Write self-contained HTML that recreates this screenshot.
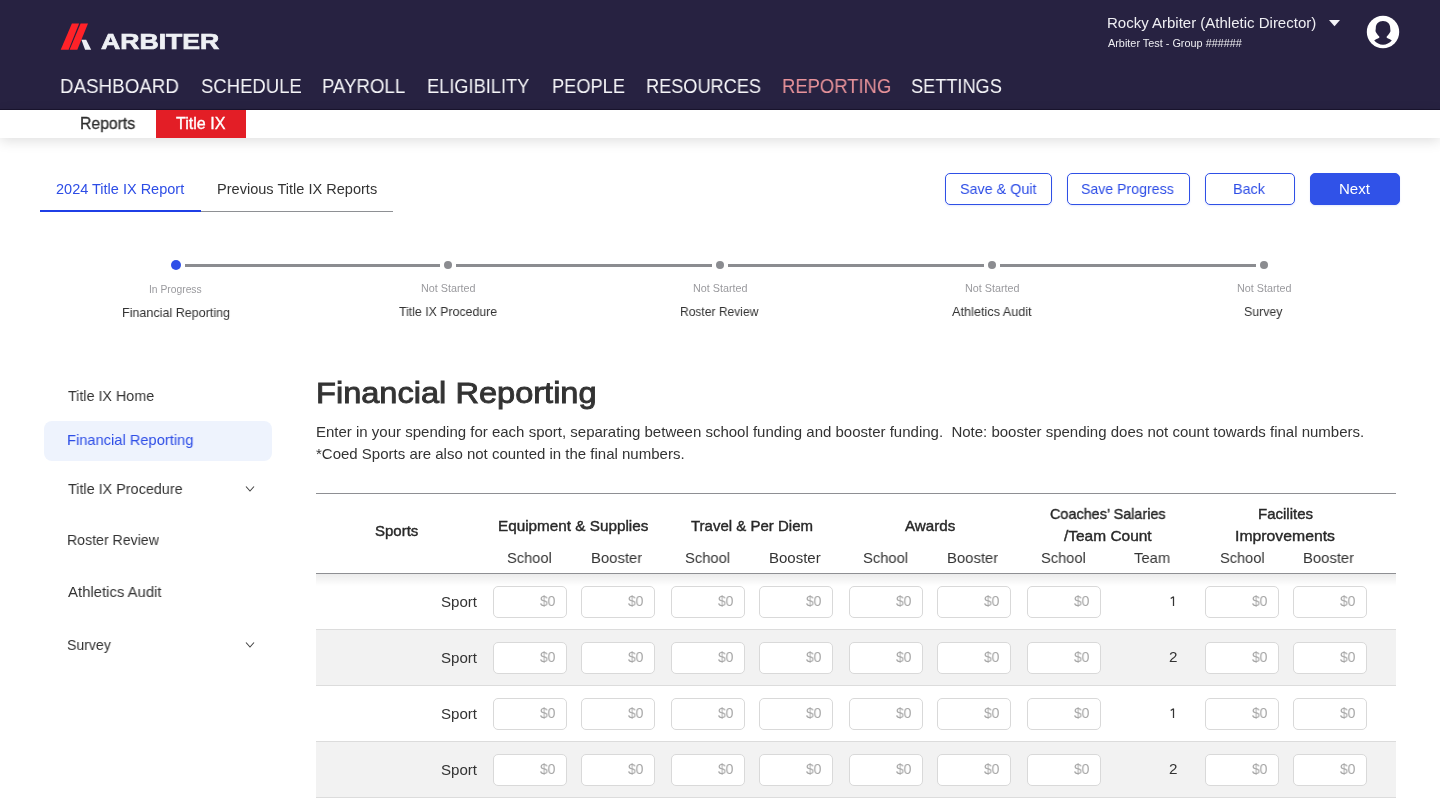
<!DOCTYPE html>
<html><head><meta charset="utf-8">
<style>
html,body{margin:0;padding:0;}
body{width:1440px;height:810px;overflow:hidden;position:relative;background:#fff;font-family:"Liberation Sans",sans-serif;}
.t{position:absolute;white-space:nowrap;transform-origin:0 0;will-change:transform;font-family:"Liberation Sans",sans-serif;}
.abs{position:absolute;}
.hdr{position:absolute;left:0;top:0;width:1440px;height:110px;background:#272241;}
.hdrline{position:absolute;left:0;top:109px;width:1440px;height:1px;background:#19142e;}
.subnav{position:absolute;left:0;top:110px;width:1440px;height:28px;background:#fff;box-shadow:0 3px 13px rgba(0,0,0,0.13);}
.redtab{position:absolute;left:156px;top:110px;width:90px;height:28px;background:#e31e26;}
.btn{position:absolute;top:173px;height:30px;border:1px solid #2f50e6;border-radius:5px;background:#fff;box-sizing:content-box;box-shadow:0 1px 2px rgba(53,86,230,0.12);}
.hl{position:absolute;height:1px;}
.row{position:absolute;left:316px;width:1080px;height:55px;}
.inp{position:absolute;width:72px;height:30px;border:1px solid #d9d9d9;border-radius:5px;background:#fff;}
.dot{position:absolute;border-radius:50%;}
.sline{position:absolute;top:264px;height:3px;background:#8b8c90;}
</style></head>
<body>
<div class="hdr"></div>
<div class="hdrline"></div>
<svg class="abs" style="left:0;top:0" width="240" height="60" viewBox="0 0 240 60">
  <polygon points="71.9,23.6 79.1,23.6 68.6,49.7 60.7,49.7" fill="#ff2228"/>
  <polygon points="80.6,23.6 88,23.6 77.3,49.7 69.6,49.7" fill="#ff2228"/>
  <polygon points="81.4,39.8 86.2,39.8 91.2,49.7 85.1,49.7" fill="#eef0f4"/>
</svg>
<svg class="abs" style="left:1329px;top:20px" width="11" height="7" viewBox="0 0 11 7"><polygon points="0,0 11,0 5.5,6.2" fill="#f5f5f8"/></svg>
<svg class="abs" style="left:1366px;top:15px" width="34" height="34" viewBox="0 0 34 34">
  <circle cx="17" cy="17" r="16.2" fill="#ffffff"/>
  <path d="M17 6C12.5 6 9.8 9 9.8 13C9.8 14.5 9.3 15.5 9.6 16.4C10 17.6 11.5 19.6 13.3 21.4L13.3 22.8C11.5 23.8 9.5 24.5 8.2 25.6C10.5 28.1 13.5 29.8 17 29.8C20.5 29.8 23.5 28.1 25.8 25.6C24.5 24.5 22.5 23.8 20.7 22.8L20.7 21.4C22.5 19.6 24 17.6 24.4 16.4C24.7 15.5 24.2 14.5 24.2 13C24.2 9 21.5 6 17 6Z" fill="#272241"/>
</svg>
<div class="subnav"></div>
<div class="redtab"></div>
<!-- tabs -->
<div class="hl" style="left:40px;top:211px;width:353px;background:#8e9094"></div>
<div class="abs" style="left:40px;top:210px;width:161px;height:2px;background:#1f3fe6"></div>
<!-- buttons -->
<div class="btn" style="left:945px;width:105px"></div>
<div class="btn" style="left:1067px;width:121px"></div>
<div class="btn" style="left:1205px;width:88px"></div>
<div class="btn" style="left:1310px;width:88px;background:#3052e8;border-color:#3052e8"></div>
<!-- stepper -->
<div class="dot" style="left:171px;top:260px;width:10px;height:10px;background:#2f4fe8"></div>
<div class="sline" style="left:185px;width:255px"></div>
<div class="dot" style="left:444px;top:261px;width:8px;height:8px;background:#8b8c90"></div>
<div class="sline" style="left:456px;width:256px"></div>
<div class="dot" style="left:716px;top:261px;width:8px;height:8px;background:#8b8c90"></div>
<div class="sline" style="left:728px;width:256px"></div>
<div class="dot" style="left:988px;top:261px;width:8px;height:8px;background:#8b8c90"></div>
<div class="sline" style="left:1000px;width:256px"></div>
<div class="dot" style="left:1260px;top:261px;width:8px;height:8px;background:#8b8c90"></div>
<!-- sidebar -->
<div class="abs" style="left:44px;top:421px;width:228px;height:40px;border-radius:8px;background:#eef3fd"></div>
<svg class="abs" style="left:245px;top:485px" width="10" height="8" viewBox="0 0 10 8"><polyline points="1,1.5 5,6 9,1.5" fill="none" stroke="#444" stroke-width="1.1"/></svg>
<svg class="abs" style="left:245px;top:641px" width="10" height="8" viewBox="0 0 10 8"><polyline points="1,1.5 5,6 9,1.5" fill="none" stroke="#444" stroke-width="1.1"/></svg>
<!-- table -->
<div class="hl" style="left:316px;top:493px;width:1080px;background:#8e8f93"></div>
<div class="abs" style="left:316px;top:574px;width:1080px;height:14px;background:linear-gradient(rgba(0,0,0,0.09),rgba(0,0,0,0))"></div>
<div class="row" style="top:574px;background:#ffffff"></div>
<div class="hl" style="top:629px;left:316px;width:1080px;background:#dcdcdc"></div>
<span class="t" style="left:440.89px;top:594.00px;font-size:15px;line-height:15px;color:#333333;transform:scaleX(1.0057);">Sport</span>
<div class="inp" style="left:493px;top:586px"></div>
<span class="t" style="left:539.60px;top:593.30px;font-size:15px;line-height:15px;color:#a6a6a6;transform:scaleX(0.9250);">$0</span>
<div class="inp" style="left:581px;top:586px"></div>
<span class="t" style="left:627.60px;top:593.30px;font-size:15px;line-height:15px;color:#a6a6a6;transform:scaleX(0.9250);">$0</span>
<div class="inp" style="left:671px;top:586px"></div>
<span class="t" style="left:717.60px;top:593.30px;font-size:15px;line-height:15px;color:#a6a6a6;transform:scaleX(0.9250);">$0</span>
<div class="inp" style="left:759px;top:586px"></div>
<span class="t" style="left:805.60px;top:593.30px;font-size:15px;line-height:15px;color:#a6a6a6;transform:scaleX(0.9250);">$0</span>
<div class="inp" style="left:849px;top:586px"></div>
<span class="t" style="left:895.60px;top:593.30px;font-size:15px;line-height:15px;color:#a6a6a6;transform:scaleX(0.9250);">$0</span>
<div class="inp" style="left:937px;top:586px"></div>
<span class="t" style="left:983.60px;top:593.30px;font-size:15px;line-height:15px;color:#a6a6a6;transform:scaleX(0.9250);">$0</span>
<div class="inp" style="left:1027px;top:586px"></div>
<span class="t" style="left:1073.60px;top:593.30px;font-size:15px;line-height:15px;color:#a6a6a6;transform:scaleX(0.9250);">$0</span>
<div class="inp" style="left:1205px;top:586px"></div>
<span class="t" style="left:1251.60px;top:593.30px;font-size:15px;line-height:15px;color:#a6a6a6;transform:scaleX(0.9250);">$0</span>
<div class="inp" style="left:1293px;top:586px"></div>
<span class="t" style="left:1339.60px;top:593.30px;font-size:15px;line-height:15px;color:#a6a6a6;transform:scaleX(0.9250);">$0</span>
<svg class="abs" style="left:1165px;top:590px" width="14" height="20" viewBox="0 0 14 20"><path d="M5.7 8.5 L8.5 6.7 L8.5 15.9" stroke="#333" stroke-width="1.25" fill="none" stroke-linejoin="bevel"/></svg>
<div class="row" style="top:630px;background:#f2f2f2"></div>
<div class="hl" style="top:685px;left:316px;width:1080px;background:#dcdcdc"></div>
<span class="t" style="left:440.89px;top:650.00px;font-size:15px;line-height:15px;color:#333333;transform:scaleX(1.0057);">Sport</span>
<div class="inp" style="left:493px;top:642px"></div>
<span class="t" style="left:539.60px;top:649.30px;font-size:15px;line-height:15px;color:#a6a6a6;transform:scaleX(0.9250);">$0</span>
<div class="inp" style="left:581px;top:642px"></div>
<span class="t" style="left:627.60px;top:649.30px;font-size:15px;line-height:15px;color:#a6a6a6;transform:scaleX(0.9250);">$0</span>
<div class="inp" style="left:671px;top:642px"></div>
<span class="t" style="left:717.60px;top:649.30px;font-size:15px;line-height:15px;color:#a6a6a6;transform:scaleX(0.9250);">$0</span>
<div class="inp" style="left:759px;top:642px"></div>
<span class="t" style="left:805.60px;top:649.30px;font-size:15px;line-height:15px;color:#a6a6a6;transform:scaleX(0.9250);">$0</span>
<div class="inp" style="left:849px;top:642px"></div>
<span class="t" style="left:895.60px;top:649.30px;font-size:15px;line-height:15px;color:#a6a6a6;transform:scaleX(0.9250);">$0</span>
<div class="inp" style="left:937px;top:642px"></div>
<span class="t" style="left:983.60px;top:649.30px;font-size:15px;line-height:15px;color:#a6a6a6;transform:scaleX(0.9250);">$0</span>
<div class="inp" style="left:1027px;top:642px"></div>
<span class="t" style="left:1073.60px;top:649.30px;font-size:15px;line-height:15px;color:#a6a6a6;transform:scaleX(0.9250);">$0</span>
<div class="inp" style="left:1205px;top:642px"></div>
<span class="t" style="left:1251.60px;top:649.30px;font-size:15px;line-height:15px;color:#a6a6a6;transform:scaleX(0.9250);">$0</span>
<div class="inp" style="left:1293px;top:642px"></div>
<span class="t" style="left:1339.60px;top:649.30px;font-size:15px;line-height:15px;color:#a6a6a6;transform:scaleX(0.9250);">$0</span>
<span class="t" style="left:1168.59px;top:649.00px;font-size:15px;line-height:15px;color:#333333;transform:scaleX(1.0143);">2</span>
<div class="row" style="top:686px;background:#ffffff"></div>
<div class="hl" style="top:741px;left:316px;width:1080px;background:#dcdcdc"></div>
<span class="t" style="left:440.89px;top:706.00px;font-size:15px;line-height:15px;color:#333333;transform:scaleX(1.0057);">Sport</span>
<div class="inp" style="left:493px;top:698px"></div>
<span class="t" style="left:539.60px;top:705.30px;font-size:15px;line-height:15px;color:#a6a6a6;transform:scaleX(0.9250);">$0</span>
<div class="inp" style="left:581px;top:698px"></div>
<span class="t" style="left:627.60px;top:705.30px;font-size:15px;line-height:15px;color:#a6a6a6;transform:scaleX(0.9250);">$0</span>
<div class="inp" style="left:671px;top:698px"></div>
<span class="t" style="left:717.60px;top:705.30px;font-size:15px;line-height:15px;color:#a6a6a6;transform:scaleX(0.9250);">$0</span>
<div class="inp" style="left:759px;top:698px"></div>
<span class="t" style="left:805.60px;top:705.30px;font-size:15px;line-height:15px;color:#a6a6a6;transform:scaleX(0.9250);">$0</span>
<div class="inp" style="left:849px;top:698px"></div>
<span class="t" style="left:895.60px;top:705.30px;font-size:15px;line-height:15px;color:#a6a6a6;transform:scaleX(0.9250);">$0</span>
<div class="inp" style="left:937px;top:698px"></div>
<span class="t" style="left:983.60px;top:705.30px;font-size:15px;line-height:15px;color:#a6a6a6;transform:scaleX(0.9250);">$0</span>
<div class="inp" style="left:1027px;top:698px"></div>
<span class="t" style="left:1073.60px;top:705.30px;font-size:15px;line-height:15px;color:#a6a6a6;transform:scaleX(0.9250);">$0</span>
<div class="inp" style="left:1205px;top:698px"></div>
<span class="t" style="left:1251.60px;top:705.30px;font-size:15px;line-height:15px;color:#a6a6a6;transform:scaleX(0.9250);">$0</span>
<div class="inp" style="left:1293px;top:698px"></div>
<span class="t" style="left:1339.60px;top:705.30px;font-size:15px;line-height:15px;color:#a6a6a6;transform:scaleX(0.9250);">$0</span>
<svg class="abs" style="left:1165px;top:702px" width="14" height="20" viewBox="0 0 14 20"><path d="M5.7 8.5 L8.5 6.7 L8.5 15.9" stroke="#333" stroke-width="1.25" fill="none" stroke-linejoin="bevel"/></svg>
<div class="row" style="top:742px;background:#f2f2f2"></div>
<div class="hl" style="top:797px;left:316px;width:1080px;background:#dcdcdc"></div>
<span class="t" style="left:440.89px;top:762.00px;font-size:15px;line-height:15px;color:#333333;transform:scaleX(1.0057);">Sport</span>
<div class="inp" style="left:493px;top:754px"></div>
<span class="t" style="left:539.60px;top:761.30px;font-size:15px;line-height:15px;color:#a6a6a6;transform:scaleX(0.9250);">$0</span>
<div class="inp" style="left:581px;top:754px"></div>
<span class="t" style="left:627.60px;top:761.30px;font-size:15px;line-height:15px;color:#a6a6a6;transform:scaleX(0.9250);">$0</span>
<div class="inp" style="left:671px;top:754px"></div>
<span class="t" style="left:717.60px;top:761.30px;font-size:15px;line-height:15px;color:#a6a6a6;transform:scaleX(0.9250);">$0</span>
<div class="inp" style="left:759px;top:754px"></div>
<span class="t" style="left:805.60px;top:761.30px;font-size:15px;line-height:15px;color:#a6a6a6;transform:scaleX(0.9250);">$0</span>
<div class="inp" style="left:849px;top:754px"></div>
<span class="t" style="left:895.60px;top:761.30px;font-size:15px;line-height:15px;color:#a6a6a6;transform:scaleX(0.9250);">$0</span>
<div class="inp" style="left:937px;top:754px"></div>
<span class="t" style="left:983.60px;top:761.30px;font-size:15px;line-height:15px;color:#a6a6a6;transform:scaleX(0.9250);">$0</span>
<div class="inp" style="left:1027px;top:754px"></div>
<span class="t" style="left:1073.60px;top:761.30px;font-size:15px;line-height:15px;color:#a6a6a6;transform:scaleX(0.9250);">$0</span>
<div class="inp" style="left:1205px;top:754px"></div>
<span class="t" style="left:1251.60px;top:761.30px;font-size:15px;line-height:15px;color:#a6a6a6;transform:scaleX(0.9250);">$0</span>
<div class="inp" style="left:1293px;top:754px"></div>
<span class="t" style="left:1339.60px;top:761.30px;font-size:15px;line-height:15px;color:#a6a6a6;transform:scaleX(0.9250);">$0</span>
<span class="t" style="left:1168.59px;top:761.00px;font-size:15px;line-height:15px;color:#333333;transform:scaleX(1.0143);">2</span>
<div class="abs" style="left:316px;top:574px;width:1080px;height:12px;background:linear-gradient(rgba(0,0,0,0.08),rgba(0,0,0,0))"></div>
<div class="hl" style="left:316px;top:573px;width:1080px;background:#8e8f93"></div>
<span class="t" style="left:101.00px;top:32.40px;font-size:21.5px;line-height:21.5px;color:#eef0f4;font-weight:700;-webkit-text-stroke:0.7px #eef0f4;transform:scaleX(1.2379);">ARBITER</span>
<span class="t" style="left:1107.30px;top:15.20px;font-size:15px;line-height:15px;color:#eeeef2;">Rocky Arbiter (Athletic Director)</span>
<span class="t" style="left:1108.00px;top:38.00px;font-size:10.5px;line-height:10.5px;color:#eeeef2;transform:scaleX(1.0349);">Arbiter Test - Group ######</span>
<span class="t" style="left:59.72px;top:76.10px;font-size:20px;line-height:20px;color:#f5f5f8;transform:scaleX(0.9387);">DASHBOARD</span>
<span class="t" style="left:201.07px;top:76.10px;font-size:20px;line-height:20px;color:#f5f5f8;transform:scaleX(0.9252);">SCHEDULE</span>
<span class="t" style="left:322.14px;top:76.10px;font-size:20px;line-height:20px;color:#f5f5f8;transform:scaleX(0.9310);">PAYROLL</span>
<span class="t" style="left:426.98px;top:76.10px;font-size:20px;line-height:20px;color:#f5f5f8;transform:scaleX(0.9109);">ELIGIBILITY</span>
<span class="t" style="left:551.98px;top:76.10px;font-size:20px;line-height:20px;color:#f5f5f8;transform:scaleX(0.9117);">PEOPLE</span>
<span class="t" style="left:645.88px;top:76.10px;font-size:20px;line-height:20px;color:#f5f5f8;transform:scaleX(0.9081);">RESOURCES</span>
<span class="t" style="left:782.16px;top:76.10px;font-size:20px;line-height:20px;color:#e8939a;transform:scaleX(0.9217);">REPORTING</span>
<span class="t" style="left:911.09px;top:76.10px;font-size:20px;line-height:20px;color:#f5f5f8;transform:scaleX(0.9082);">SETTINGS</span>
<span class="t" style="left:79.51px;top:116.20px;font-size:16px;line-height:16px;color:#2e2e2e;-webkit-text-stroke:0.3px #2e2e2e;transform:scaleX(0.9855);">Reports</span>
<span class="t" style="left:176.40px;top:116.00px;font-size:16px;line-height:16px;color:#ffffff;-webkit-text-stroke:0.35px #ffffff;transform:scaleX(1.0041);">Title IX</span>
<span class="t" style="left:55.50px;top:182.00px;font-size:14.5px;line-height:14.5px;color:#2d4de6;">2024 Title IX Report</span>
<span class="t" style="left:216.70px;top:182.00px;font-size:14.5px;line-height:14.5px;color:#333333;transform:scaleX(1.0038);">Previous Title IX Reports</span>
<span class="t" style="left:959.54px;top:181.10px;font-size:15px;line-height:15px;color:#2d4de6;transform:scaleX(0.9557);">Save &amp; Quit</span>
<span class="t" style="left:1081.46px;top:181.10px;font-size:15px;line-height:15px;color:#2d4de6;transform:scaleX(0.9423);">Save Progress</span>
<span class="t" style="left:1233.34px;top:181.10px;font-size:15px;line-height:15px;color:#2d4de6;transform:scaleX(0.9594);">Back</span>
<span class="t" style="left:1339.31px;top:181.10px;font-size:15px;line-height:15px;color:#ffffff;transform:scaleX(0.9900);">Next</span>
<span class="t" style="left:149.27px;top:284.80px;font-size:10px;line-height:10px;color:#9a9a9e;transform:scaleX(1.0300);">In Progress</span>
<span class="t" style="left:420.52px;top:284.00px;font-size:10px;line-height:10px;color:#9a9a9e;transform:scaleX(1.0776);">Not Started</span>
<span class="t" style="left:692.52px;top:284.00px;font-size:10px;line-height:10px;color:#9a9a9e;transform:scaleX(1.0776);">Not Started</span>
<span class="t" style="left:964.52px;top:284.00px;font-size:10px;line-height:10px;color:#9a9a9e;transform:scaleX(1.0776);">Not Started</span>
<span class="t" style="left:1236.52px;top:284.00px;font-size:10px;line-height:10px;color:#9a9a9e;transform:scaleX(1.0776);">Not Started</span>
<span class="t" style="left:121.94px;top:306.00px;font-size:13px;line-height:13px;color:#333333;transform:scaleX(0.9645);">Financial Reporting</span>
<span class="t" style="left:399.00px;top:305.00px;font-size:13px;line-height:13px;color:#333333;transform:scaleX(0.9476);">Title IX Procedure</span>
<span class="t" style="left:680.47px;top:305.00px;font-size:13px;line-height:13px;color:#333333;transform:scaleX(0.9262);">Roster Review</span>
<span class="t" style="left:951.70px;top:305.00px;font-size:13px;line-height:13px;color:#333333;transform:scaleX(0.9756);">Athletics Audit</span>
<span class="t" style="left:1244.45px;top:305.00px;font-size:13px;line-height:13px;color:#333333;transform:scaleX(0.9487);">Survey</span>
<span class="t" style="left:68.30px;top:388.20px;font-size:15px;line-height:15px;color:#333333;transform:scaleX(0.9544);">Title IX Home</span>
<span class="t" style="left:67.32px;top:432.00px;font-size:15px;line-height:15px;color:#2d4de6;transform:scaleX(0.9780);">Financial Reporting</span>
<span class="t" style="left:68.40px;top:480.50px;font-size:15px;line-height:15px;color:#333333;transform:scaleX(0.9588);">Title IX Procedure</span>
<span class="t" style="left:67.46px;top:532.30px;font-size:15px;line-height:15px;color:#333333;transform:scaleX(0.9423);">Roster Review</span>
<span class="t" style="left:68.40px;top:584.20px;font-size:15px;line-height:15px;color:#333333;transform:scaleX(0.9926);">Athletics Audit</span>
<span class="t" style="left:67.46px;top:636.50px;font-size:15px;line-height:15px;color:#333333;transform:scaleX(0.9391);">Survey</span>
<span class="t" style="left:315.89px;top:378.00px;font-size:29.5px;line-height:29.5px;color:#333333;-webkit-text-stroke:0.9px #333333;transform:scaleX(1.1040);">Financial Reporting</span>
<span class="t" style="left:315.50px;top:424.20px;font-size:15px;line-height:15px;color:#333333;">Enter in your spending for each sport, separating between school funding and booster funding.&nbsp; Note: booster spending does not count towards final numbers.</span>
<span class="t" style="left:315.50px;top:445.70px;font-size:15px;line-height:15px;color:#333333;">*Coed Sports are also not counted in the final numbers.</span>
<span class="t" style="left:375.00px;top:523.25px;font-size:15px;line-height:15px;color:#282828;-webkit-text-stroke:0.4px #282828;">Sports</span>
<span class="t" style="left:498.23px;top:517.50px;font-size:15px;line-height:15px;color:#282828;-webkit-text-stroke:0.4px #282828;transform:scaleX(1.0188);">Equipment &amp; Supplies</span>
<span class="t" style="left:691.25px;top:517.50px;font-size:15px;line-height:15px;color:#282828;-webkit-text-stroke:0.4px #282828;">Travel &amp; Per Diem</span>
<span class="t" style="left:904.50px;top:517.50px;font-size:15px;line-height:15px;color:#282828;-webkit-text-stroke:0.4px #282828;transform:scaleX(1.0100);">Awards</span>
<span class="t" style="left:1049.80px;top:506.30px;font-size:15px;line-height:15px;color:#282828;-webkit-text-stroke:0.4px #282828;transform:scaleX(0.9608);">Coaches’ Salaries</span>
<span class="t" style="left:1063.50px;top:528.20px;font-size:15px;line-height:15px;color:#282828;-webkit-text-stroke:0.4px #282828;transform:scaleX(1.0306);">/Team Count</span>
<span class="t" style="left:1257.80px;top:506.30px;font-size:15px;line-height:15px;color:#282828;-webkit-text-stroke:0.4px #282828;">Facilites</span>
<span class="t" style="left:1235.35px;top:528.20px;font-size:15px;line-height:15px;color:#282828;-webkit-text-stroke:0.4px #282828;transform:scaleX(1.0521);">Improvements</span>
<span class="t" style="left:507.27px;top:550.00px;font-size:15px;line-height:15px;color:#333333;transform:scaleX(0.9773);">School</span>
<span class="t" style="left:591.01px;top:550.00px;font-size:15px;line-height:15px;color:#333333;transform:scaleX(0.9902);">Booster</span>
<span class="t" style="left:685.27px;top:550.00px;font-size:15px;line-height:15px;color:#333333;transform:scaleX(0.9830);">School</span>
<span class="t" style="left:769.00px;top:550.00px;font-size:15px;line-height:15px;color:#333333;transform:scaleX(0.9951);">Booster</span>
<span class="t" style="left:863.27px;top:550.00px;font-size:15px;line-height:15px;color:#333333;transform:scaleX(0.9830);">School</span>
<span class="t" style="left:947.26px;top:550.00px;font-size:15px;line-height:15px;color:#333333;transform:scaleX(0.9902);">Booster</span>
<span class="t" style="left:1041.42px;top:550.00px;font-size:15px;line-height:15px;color:#333333;transform:scaleX(0.9773);">School</span>
<span class="t" style="left:1133.50px;top:550.00px;font-size:15px;line-height:15px;color:#333333;transform:scaleX(0.9861);">Team</span>
<span class="t" style="left:1219.53px;top:550.00px;font-size:15px;line-height:15px;color:#333333;transform:scaleX(0.9727);">School</span>
<span class="t" style="left:1303.21px;top:550.00px;font-size:15px;line-height:15px;color:#333333;transform:scaleX(0.9882);">Booster</span>
</body></html>
